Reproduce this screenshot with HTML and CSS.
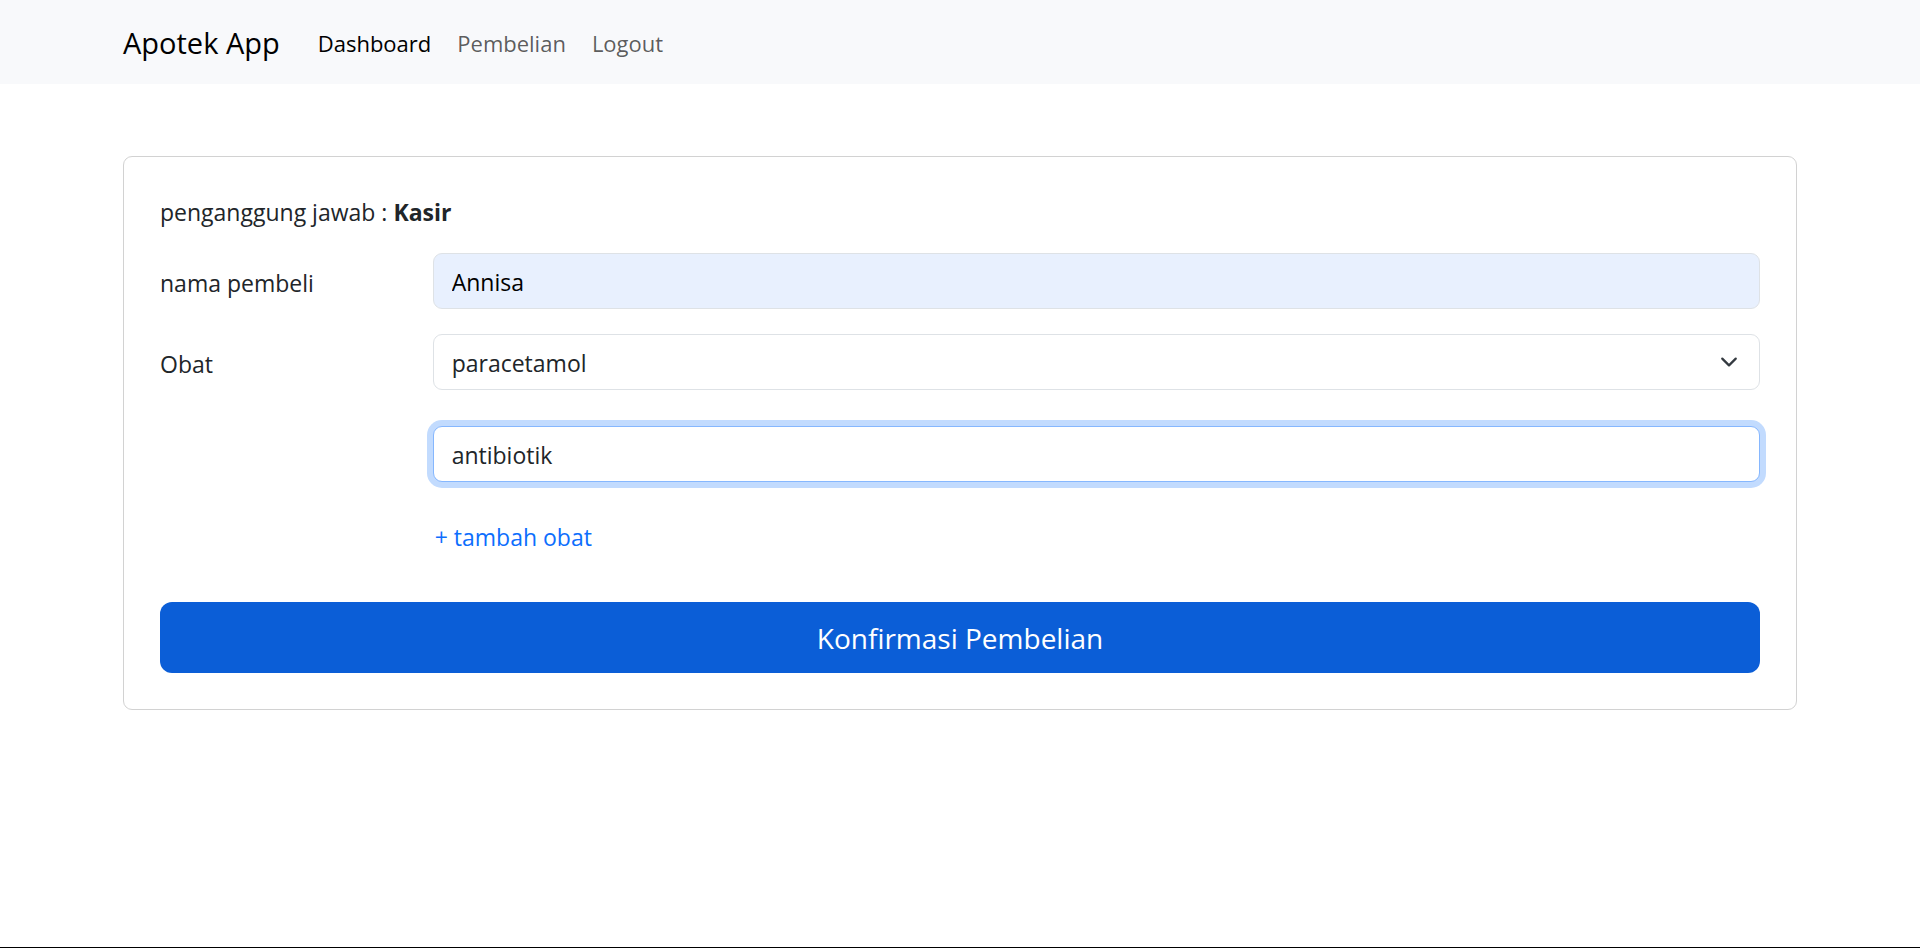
FILE: index.html
```html
<!DOCTYPE html>
<html lang="id">
<head>
  <meta charset="utf-8">
  <meta name="viewport" content="width=device-width, initial-scale=1">
  <title>Apotek App</title>
  <link rel="stylesheet" href="styles.css">
</head>
<body>
  <header class="navbar">
    <nav class="container navbar-inner">
      <a class="brand" href="#">Apotek App</a>
      <ul class="nav-list">
        <li><a class="nav-link active" href="#" aria-current="page">Dashboard</a></li>
        <li><a class="nav-link" href="#">Pembelian</a></li>
        <li><a class="nav-link" href="#">Logout</a></li>
      </ul>
    </nav>
  </header>
  <main class="container">
    <form class="card">
      <p class="cashier">penganggung jawab : <b>Kasir</b></p>
      <div class="row">
        <label class="label" for="nama">nama pembeli</label>
        <div class="fields">
          <input class="control autofilled" id="nama" type="text" value="Annisa">
        </div>
      </div>
      <div class="row">
        <label class="label" for="obat">Obat</label>
        <div class="fields">
          <div class="select-wrap">
            <select class="control" id="obat">
              <option>paracetamol</option>
              <option>antibiotik</option>
            </select>
            <svg class="chevron" viewBox="0 0 16 16" aria-hidden="true"><path d="m2 5 6 6 6-6"/></svg>
          </div>
          <input class="control focused" type="text" value="antibiotik" aria-label="Obat 2">
          <a class="add-link" href="#">+ tambah obat</a>
        </div>
      </div>
      <button class="submit" type="submit">Konfirmasi Pembelian</button>
    </form>
  </main>
</body>
</html>
```
FILE: styles.css
```css
*, *::before, *::after { box-sizing: border-box; }

body {
  margin: 0;
  min-height: 100vh;
  border-bottom: 1px solid #000;
  background: #fff;
  color: #212529;
  font-family: "Segoe UI", "Open Sans", "Noto Sans", sans-serif;
  font-size: 23px;
  line-height: 36px;
}

a { text-decoration: none; }

.container {
  width: 100%;
  max-width: 1710px;
  margin: 0 auto;
  padding: 0 18px;
}

.navbar { padding: 12px 0; background: #f8f9fb; }

.navbar-inner { display: flex; align-items: center; gap: 25px; }

.brand {
  padding: 9px 0 7px;
  color: #000;
  font-size: 29px;
  line-height: 44px;
}

.nav-list {
  display: flex;
  margin: 0;
  padding: 0;
  list-style: none;
}

.nav-link {
  display: block;
  padding: 13px 13px 11px;
  color: rgba(0, 0, 0, 0.65);
  font-size: 22px;
}

.nav-link.active { color: #000; }

.card {
  margin-top: 72px;
  padding: 36px;
  border: 1px solid #d2d2d2;
  border-radius: 9px;
}

.cashier { margin: 0; padding: 1px 0 23px; }

.row {
  display: flex;
  margin: 0 -18px 25px;
}

.label { width: 16.6667%; padding: 12px 18px 8px; }

.fields { flex: 1; min-width: 0; padding: 0 18px; }

.control {
  display: block;
  width: 100%;
  height: 56px;
  padding: 10px 18px 8px;
  border: 1px solid #dee2e6;
  border-radius: 9px;
  background: #fff;
  color: #212529;
  font: inherit;
  appearance: none;
  outline: 0;
}

.autofilled { background: #e8f0fe; color: #000; }

.focused {
  border-color: #86b7fe;
  box-shadow: 0 0 0 6px #c2dbfe;
}

.select-wrap { position: relative; margin-bottom: 36px; }

.chevron {
  position: absolute;
  top: 19px;
  right: 22px;
  width: 18px;
  height: 18px;
  fill: none;
  stroke: #343a40;
  stroke-width: 2;
  stroke-linecap: round;
  stroke-linejoin: round;
  pointer-events: none;
}

.add-link {
  display: inline-block;
  margin: 37px 0 22px;
  padding: 0 2px;
  color: #0d6efd;
}

.submit {
  display: block;
  width: 100%;
  padding: 14px 24px 12px;
  border: 0;
  border-radius: 12px;
  background: #0b5ed7;
  color: #fff;
  font: inherit;
  font-size: 28px;
  line-height: 45px;
}
```
